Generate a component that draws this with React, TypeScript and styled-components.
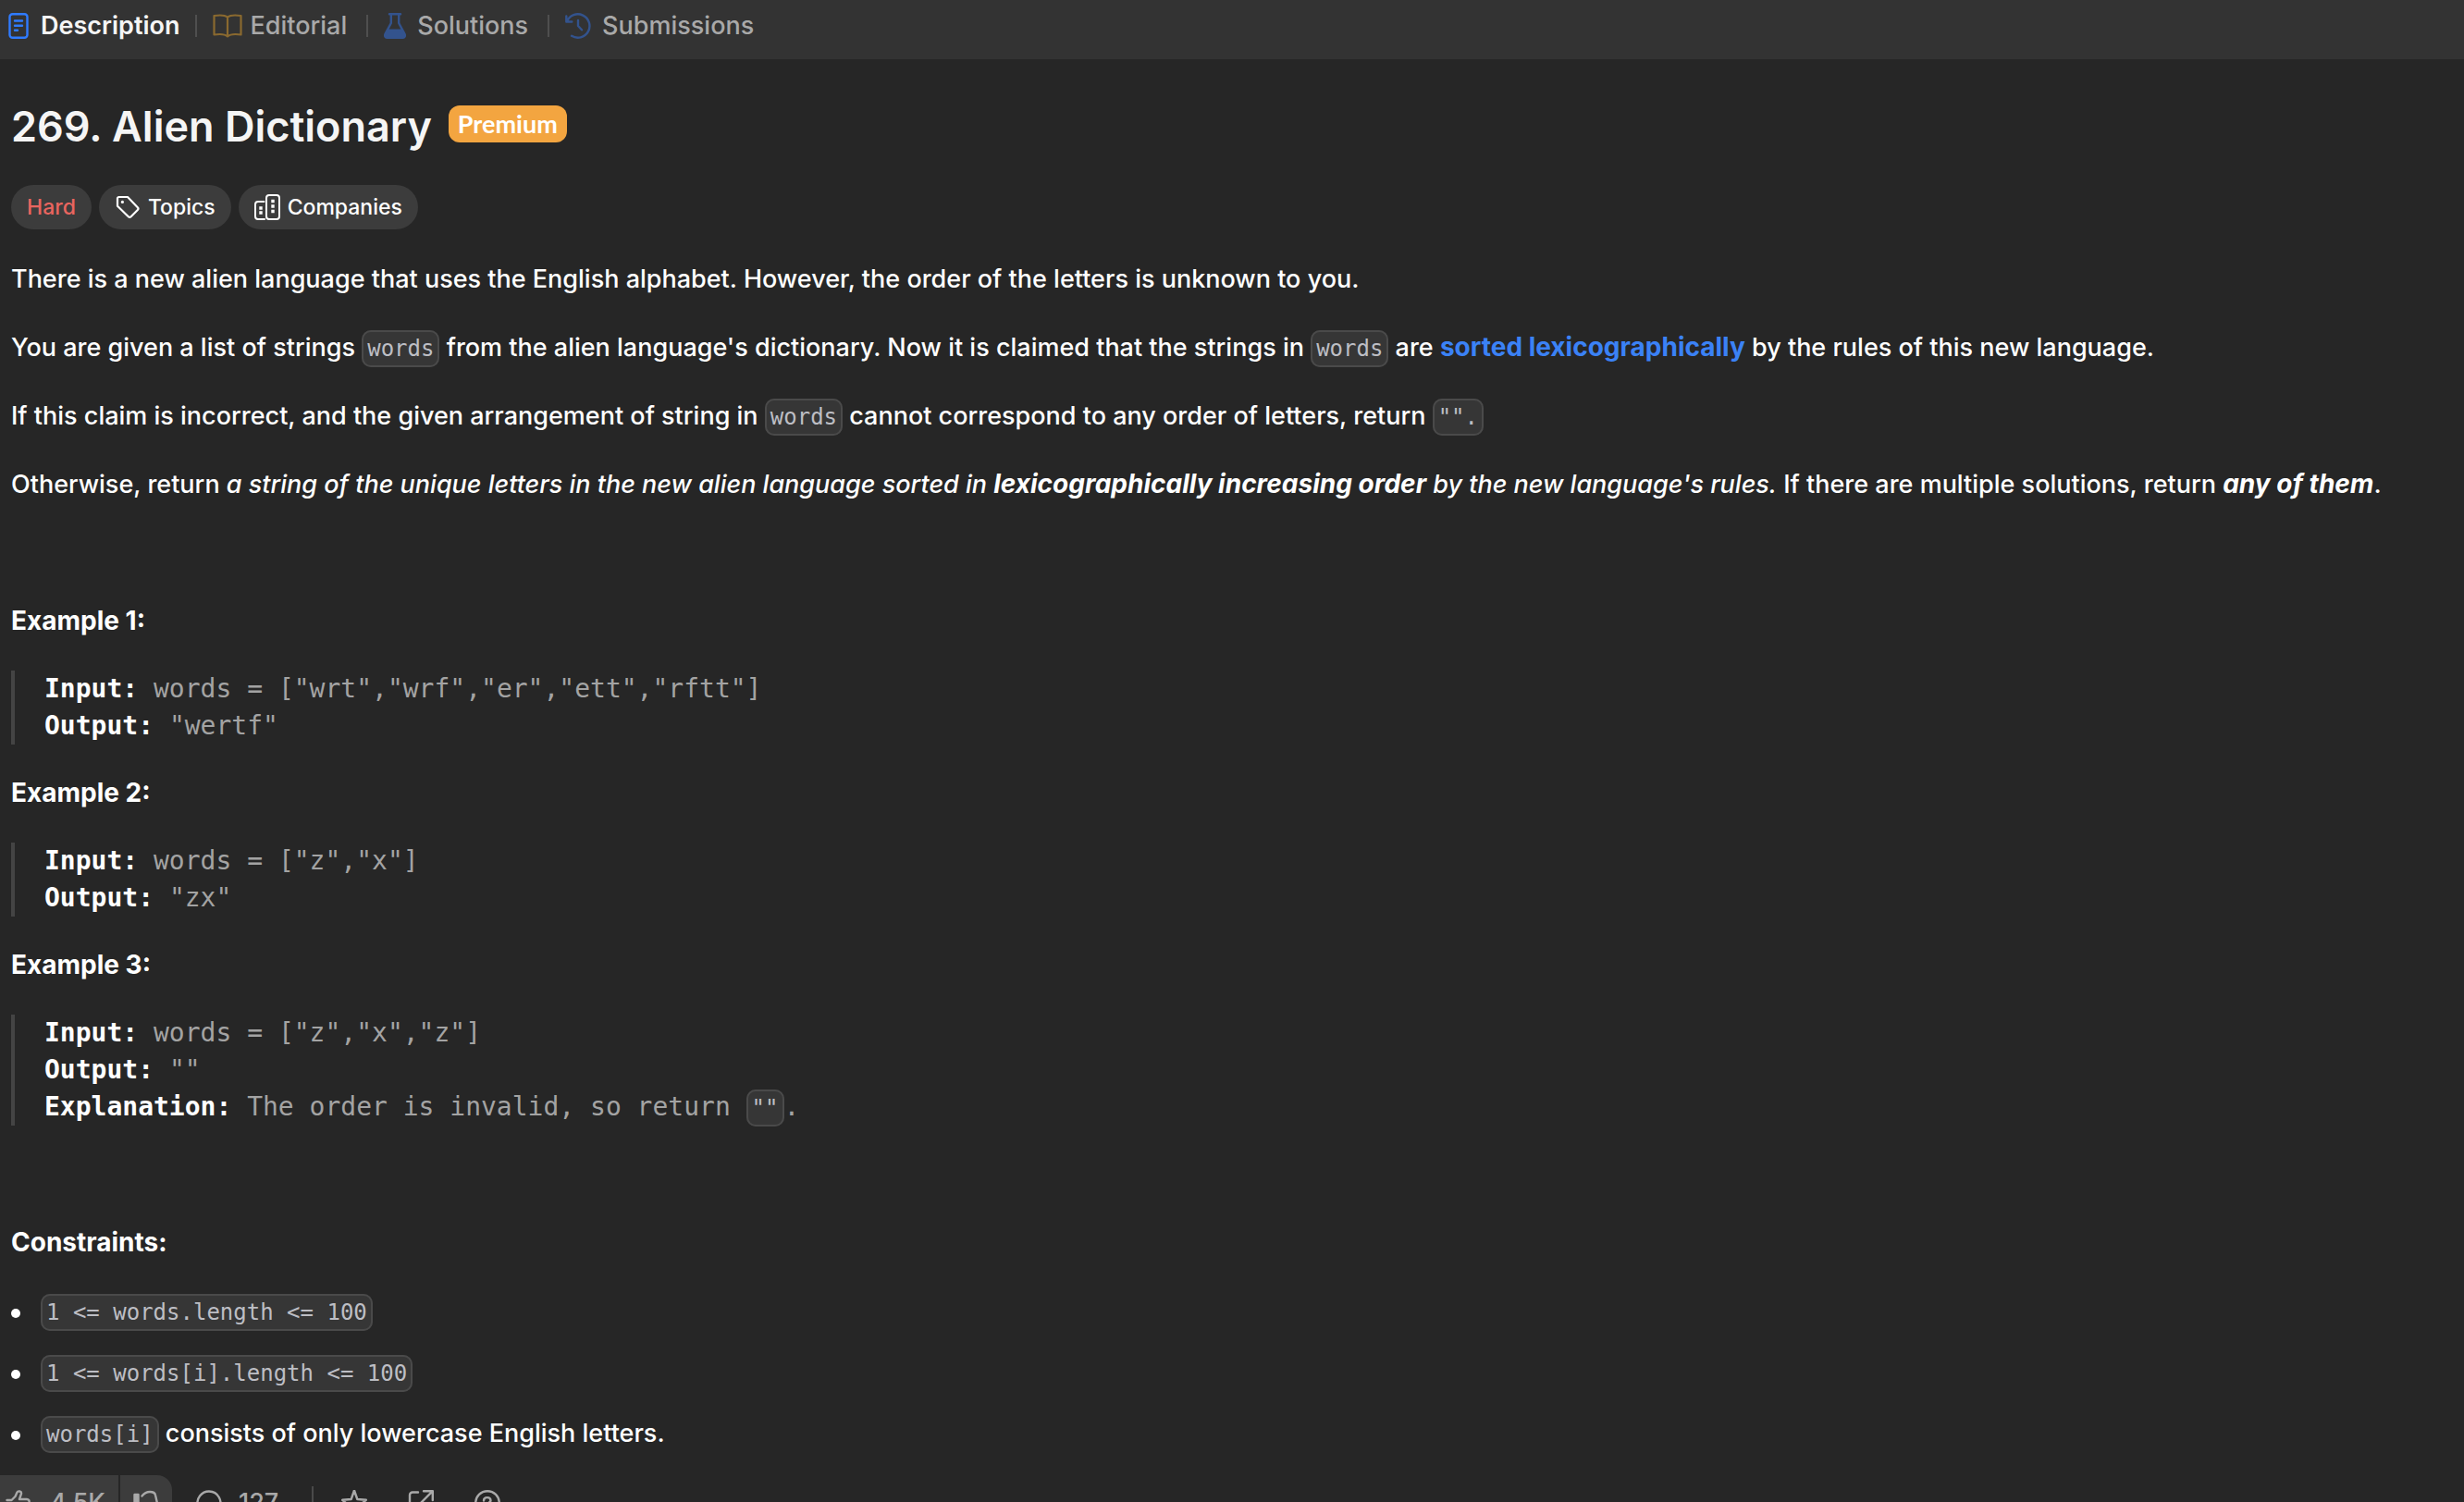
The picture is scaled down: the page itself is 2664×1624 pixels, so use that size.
import React from "react";
import styled, { createGlobalStyle } from "styled-components";

const sans = `Inter, "Liberation Sans", sans-serif`;
const mono = `"DejaVu Sans Mono", "Liberation Mono", monospace`;

const GlobalStyle = createGlobalStyle`
  * { box-sizing: border-box; }
  body { margin: 0; background: #262626; color: #fff; font-family: ${sans}; }
`;

const Page = styled.div`
  height: 100vh;
  overflow: hidden;
`;

const TabBar = styled.nav`
  display: flex;
  align-items: flex-start;
  height: 64px;
  padding: 8px 8px 0;
  background: #333;
`;

const Tab = styled.button<{ $active?: boolean; $gap: number }>`
  display: flex;
  align-items: center;
  gap: ${(p) => p.$gap}px;
  height: 40px;
  padding: 0 ${(p) => (p.$active ? 0 : 4)}px 0 0;
  border: 0;
  background: none;
  color: ${(p) => (p.$active ? "#f5f5f5" : "#a9a9a9")};
  font: ${(p) => (p.$active ? 600 : 500)} 27px/40px ${sans};
  svg { opacity: ${(p) => (p.$active ? 1 : 0.5)}; }
`;

const TabDivider = styled.span`
  width: 2px;
  height: 24px;
  margin: 8px 17px;
  background: #4f4f4f;
`;

const Content = styled.main`
  padding: 40px 12px 0;
`;

const TitleRow = styled.div`
  display: flex;
  align-items: center;
  gap: 18px;
  height: 60px;
`;

const Title = styled.h1`
  margin: 0;
  padding-top: 6px;
  color: #f5f5f5;
  font-size: 45px;
  font-weight: 600;
  line-height: 56px;
`;

const Premium = styled.span`
  padding: 0 10px;
  border-radius: 12px;
  background: #f3a540;
  font: 700 27px/40px Lato, sans-serif;
`;

const Tags = styled.div`
  display: flex;
  gap: 8px;
  margin: 36px 0 33px;
`;

const Tag = styled.button<{ $color?: string }>`
  display: flex;
  align-items: center;
  gap: 8px;
  height: 48px;
  padding: 0 17px;
  border: 0;
  border-radius: 24px;
  background: #3c3c3c;
  color: ${(p) => p.$color || "#fff"};
  font: 500 23px/32px ${sans};
`;

const Article = styled.article`
  font-size: 27px;
  font-weight: 500;
  line-height: 42px;
`;

const Paragraph = styled.p`
  margin: 0 0 32px;
`;

const Code = styled.code`
  padding: 4px;
  border: 2px solid #4a4a4a;
  border-radius: 10px;
  background: #363636;
  color: #bdbec4;
  font: 24px/28px ${mono};
`;

const Bold = styled.strong`
  font-size: 28px;
  font-weight: 700;
  line-height: 40px;
`;

const Link = styled.a`
  color: #3b82f6;
  text-decoration: none;
`;

const Example = styled.pre`
  margin: 0 0 32px;
  padding-left: 32px;
  border-left: 4px solid #444;
  color: #a3a3a3;
  font: 28px/40px ${mono};
  strong { color: #fff; font-weight: 700; }
`;

const Constraints = styled.ul`
  margin: 0 0 24px;
  padding: 0;
  list-style: none;
`;

const Constraint = styled.li`
  margin-bottom: 24px;
  &::before {
    content: "";
    display: inline-block;
    width: 10px;
    height: 10px;
    margin-right: 22px;
    border-radius: 50%;
    background: #fff;
    vertical-align: middle;
  }
`;

const Footer = styled.footer`
  display: flex;
  align-items: center;
  height: 60px;
  color: #a9a9a9;
`;

const Votes = styled.div`
  display: flex;
  gap: 2px;
  margin-left: -12px;
`;

const Vote = styled.button<{ $last?: boolean }>`
  display: flex;
  align-items: center;
  gap: 20px;
  height: 60px;
  padding: 0 14px 0 ${(p) => (p.$last ? 14 : 6)}px;
  border: 0;
  border-radius: ${(p) => (p.$last ? "0 16px 16px 0" : "0")};
  background: #3c3c3c;
  color: inherit;
  font: 500 27px/40px ${sans};
`;

const Action = styled.button`
  display: flex;
  align-items: center;
  gap: 18px;
  padding: 0;
  border: 0;
  background: none;
  color: inherit;
  font: 500 27px/40px ${sans};
`;

const CommentSlot = styled.div`
  margin: 0 36px 0 26px;
`;

const FooterDivider = styled.span`
  width: 2px;
  height: 36px;
  background: #4a4a4a;
`;

const IconRow = styled.div`
  display: flex;
  gap: 44px;
  padding-left: 30px;
`;

const line = {
  fill: "none",
  stroke: "currentColor",
  strokeLinecap: "round" as const,
  strokeLinejoin: "round" as const,
};

const DescriptionIcon = () => (
  <svg width="24" height="28" viewBox="0 0 24 28" {...line} stroke="#2f7bff" strokeWidth="2.4">
    <rect x="2.5" y="1.2" width="19" height="25.6" rx="3" />
    <path d="M8 8.500h8M8 13.700h8M8 18.800h3" />
  </svg>
);

const BookIcon = () => (
  <svg width="32" height="28" viewBox="0 0 32 28" {...line} stroke="#e0a02c" strokeWidth="2.200">
    <path d="M16 4.500C13 2.200 7 2.200 1.500 3v20.500c5.500-.8 11.500-.8 14.500 1.800 3-2.600 9-2.600 14.500-1.800V3C25 2.200 19 2.200 16 4.500zM16 4.500v20.500" />
  </svg>
);

const FlaskIcon = () => (
  <svg width="24" height="28" viewBox="0 0 24 28" fill="#3373e6">
    <path fillRule="evenodd" d="M6 0h12a1 1 0 0 1 0 2.500h-.6v8.200l6.100 11.400C25 25 23.600 28 20.500 28h-17C.4 28-1 25 .5 22.100L6.600 10.700V2.500H6A1 1 0 0 1 6 0zM9 2.500v8.800L5.700 17.600h12.600L15 11.300V2.500z" />
  </svg>
);

const HistoryIcon = () => (
  <svg width="28" height="28" viewBox="0 0 28 28" {...line} stroke="#3373e6" strokeWidth="2.400">
    <path d="M1.300 3.500v6h6M2 9.200A12.700 12.700 0 1 1 7 24.800M14 8v6l4 4.300" />
  </svg>
);

const TopicIcon = () => (
  <svg width="28" height="28" viewBox="0 0 28 28" {...line} strokeWidth="2.200">
    <path d="M3 4.500v8.300l11.800 11.400a2 2 0 0 0 2.800 0l7.200-7.200a2 2 0 0 0 0-2.800L14 3H4.500A1.500 1.500 0 0 0 3 4.500z" />
    <circle cx="8.400" cy="8.400" r="1.600" fill="currentColor" stroke="none" />
  </svg>
);

const CompanyIcon = () => (
  <svg width="28" height="28" viewBox="0 0 28 28" {...line} strokeWidth="2">
    <rect x="13" y="1" width="14" height="26" rx="3" />
    <path d="M10.500 8H4a3 3 0 0 0-3 3v13a3 3 0 0 0 3 3h7" />
    <path d="M20 7.500v.1M20 13v.1M20 18.500v.1M7 15v.1M7 20v.1" strokeWidth="3.400" strokeLinecap="square" />
  </svg>
);

const ThumbIcon = ({ down }: { down?: boolean }) => (
  <svg width="28" height="28" viewBox="0 0 28 28" {...line} strokeWidth="2.400">
    {down ? (
      <>
        <path d="M1.500 5h4v12h-4z" fill="currentColor" />
        <path d="M9.500 6.500C12 3.500 14 2 18 2c4 0 5.500 1 6 3.500l1.800 8c.4 2-.7 3.200-2.500 3.200h-6c1.200 6-.3 8.300-2.300 8.300-2 0-1.500-3-2.500-5l-2.500-4" />
      </>
    ) : (
      <path d="M1.500 11h5l4-4 2-4.500c.9-1.800 5-1.300 4.500 1.500L15 10h8c2 0 3 1.500 2.500 3.500l-2 8c-.5 2-2 3-4 3h-18" />
    )}
  </svg>
);

const CommentIcon = () => (
  <svg width="28" height="28" viewBox="0 0 28 28" {...line} strokeWidth="2.400">
    <path d="M14 1.500a12.500 12.500 0 1 0 5.500 23.700l6.500 1.300-1.600-5.800A12.500 12.500 0 0 0 14 1.500z" />
  </svg>
);

const StarIcon = () => (
  <svg width="28" height="28" viewBox="0 0 28 28" {...line} strokeWidth="2.400">
    <path d="M14 .5l3.300 9.500 9.500.8-7 6 2 9.500L14 21.500l-7.800 4.800 2-9.500-7-6 9.500-.8z" />
  </svg>
);

const ShareIcon = () => (
  <svg width="28" height="28" viewBox="0 0 28 28" {...line} strokeWidth="2.400">
    <path d="M11 2.500H5a3 3 0 0 0-3 3v17a3 3 0 0 0 3 3h17a3 3 0 0 0 3-3V16M17 1.200h9.800V11M26.800 1.200L14 14" />
  </svg>
);

const HelpIcon = () => (
  <svg width="28" height="28" viewBox="0 0 28 28" {...line} strokeWidth="2.400">
    <circle cx="14" cy="14" r="12.800" />
    <path d="M10 11.500c0-4.500 7.500-4.500 7.500 0-.3 2-3.500 2.500-3.500 4.500M14 20v.3" />
  </svg>
);

const examples = [
  { input: `words = ["wrt","wrf","er","ett","rftt"]`, output: `"wertf"` },
  { input: `words = ["z","x"]`, output: `"zx"` },
  { input: `words = ["z","x","z"]`, output: `""`, invalid: true },
];

export default function App() {
  return (
    <Page>
      <GlobalStyle />
      <TabBar>
        <Tab $active $gap={12}><DescriptionIcon />Description</Tab>
        <TabDivider />
        <Tab $gap={8}><BookIcon />Editorial</Tab>
        <TabDivider />
        <Tab $gap={12}><FlaskIcon />Solutions</Tab>
        <TabDivider />
        <Tab $gap={12}><HistoryIcon />Submissions</Tab>
      </TabBar>
      <Content>
        <TitleRow>
          <Title>269. Alien Dictionary</Title>
          <Premium>Premium</Premium>
        </TitleRow>
        <Tags>
          <Tag $color="#e9655f">Hard</Tag>
          <Tag><TopicIcon />Topics</Tag>
          <Tag><CompanyIcon />Companies</Tag>
        </Tags>
        <Article>
          <Paragraph>
            There is a new alien language that uses the English alphabet. However, the order of the letters is unknown to you.
          </Paragraph>
          <Paragraph>
            You are given a list of strings <Code>words</Code> from the alien language's dictionary. Now it is claimed that the strings in <Code>words</Code> are <Link href="#lexicographic"><Bold>sorted lexicographically</Bold></Link> by the rules of this new language.
          </Paragraph>
          <Paragraph>
            If this claim is incorrect, and the given arrangement of string in <Code>words</Code> cannot correspond to any order of letters, return <Code>"".</Code>
          </Paragraph>
          <Paragraph>
            Otherwise, return <em>a string of the unique letters in the new alien language sorted in <Bold>lexicographically increasing order</Bold> by the new language's rules.</em> If there are multiple solutions, return <em><Bold>any of them</Bold></em>.
          </Paragraph>
          <Paragraph>&nbsp;</Paragraph>
          {examples.map((example, i) => (
            <React.Fragment key={i}>
              <Paragraph><Bold>Example {i + 1}:</Bold></Paragraph>
              <Example>
                <strong>Input:</strong> {example.input}{"\n"}
                <strong>Output:</strong> {example.output}
                {example.invalid && (
                  <>{"\n"}<strong>Explanation:</strong> The order is invalid, so return <Code>""</Code>.</>
                )}
              </Example>
            </React.Fragment>
          ))}
          <Paragraph>&nbsp;</Paragraph>
          <Paragraph><Bold>Constraints:</Bold></Paragraph>
          <Constraints>
            <Constraint><Code>1 &lt;= words.length &lt;= 100</Code></Constraint>
            <Constraint><Code>1 &lt;= words[i].length &lt;= 100</Code></Constraint>
            <Constraint><Code>words[i]</Code> consists of only lowercase English letters.</Constraint>
          </Constraints>
        </Article>
        <Footer>
          <Votes>
            <Vote><ThumbIcon />4.5K</Vote>
            <Vote $last aria-label="Dislike"><ThumbIcon down /></Vote>
          </Votes>
          <CommentSlot>
            <Action><CommentIcon />127</Action>
          </CommentSlot>
          <FooterDivider />
          <IconRow>
            <Action aria-label="Favorite"><StarIcon /></Action>
            <Action aria-label="Share"><ShareIcon /></Action>
            <Action aria-label="Help"><HelpIcon /></Action>
          </IconRow>
        </Footer>
      </Content>
    </Page>
  );
}
